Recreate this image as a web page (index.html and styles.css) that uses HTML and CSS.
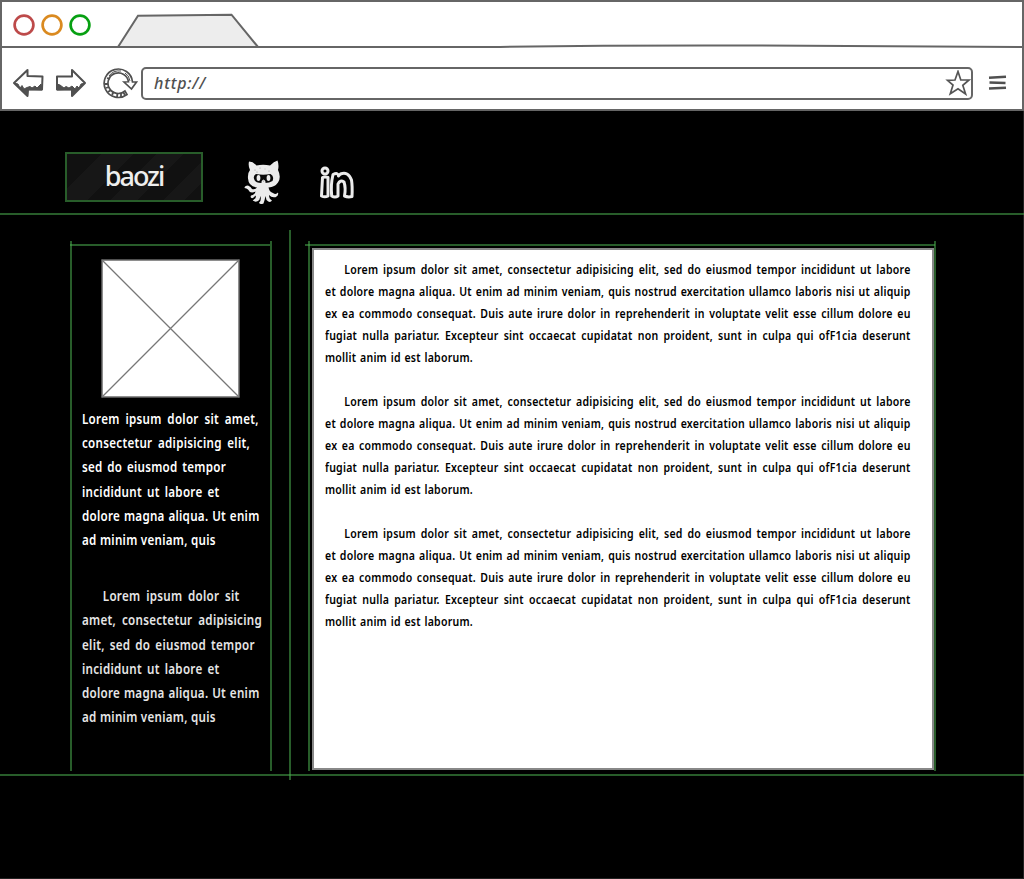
FILE: index.html
```html
<!DOCTYPE html>
<html lang="en">
<head>
<meta charset="utf-8">
<title>baozi</title>
<link rel="stylesheet" href="styles.css">
</head>
<body>
<div class="window">
  <header class="chrome">
    <div class="titlebar">
      <svg class="titlebar-art" width="1024" height="48" viewBox="0 0 1024 48">
        <g fill="none" stroke-width="2.7"><circle cx="24" cy="25" r="9.4" stroke="#bd4a4a"/><circle cx="52" cy="25" r="9.4" stroke="#da8a20"/><circle cx="80" cy="25" r="9.4" stroke="#07a012"/></g>
        <path d="M118 47 L138 15.7 L231.500 14.700 L258 47" fill="#ededed" stroke="#666" stroke-width="2"/>
        <path d="M0 47 L500 47 Q620 45 760 45.500 T1024 47" fill="none" stroke="#666" stroke-width="2"/>
      </svg>
    </div>
    <div class="toolbar">
      <svg class="arrows" width="76" height="32" viewBox="12 67 76 32" fill="none" stroke="#505050" stroke-width="2" stroke-linejoin="round">
        <path d="M14 83 L27.500 70 L27.500 76 L42.500 76.500 L42 89.500 L28 89 L27.500 96 Z"/>
        <path fill="#505050" stroke-width="1" d="M14 83 L18 84 L20 88 L22 85.500 L24 89 L27 87.500 L30 86.500 L32 88 L35 86 L37 88 L41 84 L42 90 L28 90 L27.500 96 Z"/>
        <path d="M85 83 L72 70 L72 76.500 L57 76.500 L57 89.500 L72 89 L72 96 Z"/>
        <path fill="#505050" stroke-width="1" d="M85 83 L81 84 L79 88 L77 86 L75 89 L72 86 L69 88 L66 86.500 L64 88 L60 85 L57 84 L57 90 L72 90 L72 96 Z"/>
      </svg>
      <svg class="reload" width="36" height="34" viewBox="103 66 36 34" fill="none" stroke="#505050">
        <path stroke-width="1.700" d="M127 94.500 A14.200 14.200 0 1 1 132.500 82 L136.500 82 L131.500 89 L124 82 L128.500 81.800 A10.300 10.300 0 1 0 125 91 Z"/>
        <path stroke-width="1.800" d="M105 84 h3 M106 88 l3 -1 M108 92 l3 -2 M112 95 l1.500 -3 M117 97 l.5 -4 M121 97 v-4 M125 95 l-2 -3 M107 78 l3 1"/>
        <path stroke-width="1" d="M109 76 Q113 70 121 71 M130 81 Q129 75 125 73"/>
      </svg>
      <div class="address">
        <span class="url">http://</span>
        <svg class="star" width="26" height="26" viewBox="945 70 26 26"><path d="M958 71.500 L960.800 80 L969 80 L962.800 85.300 L965.600 94 L958 88.700 L950.300 93.700 L953 85 L947.500 80.300 L955 80 Z" fill="none" stroke="#555" stroke-width="1.700"/></svg>
      </div>
      <svg class="menu" width="20" height="16" viewBox="988 75 20 16"><path d="M989 77.700 L1006 76.800 M989.500 82.500 L1005.500 83 M989 88.500 L1006 87.800" stroke="#505050" stroke-width="2.500"/></svg>
    </div>
  </header>

  <div class="page">
    <nav class="nav">
      <div class="brand">baozi</div>
      <svg class="octocat" width="38" height="46" viewBox="243 159 38 46">
        <path fill="#ececec" d="M249 161.500 Q253 161.500 256.500 165.500 Q263 164.200 270 165.500 Q274 161.500 277.500 160.500 Q279.200 165 278 170 Q281.500 177 278 182.500 Q275 187 268.500 187.500 Q269.500 192 273 193 Q276 195 278 192.500 Q279 195.500 275.500 197.200 Q271.500 198 269 195 Q269 199 272 200.500 Q270 203.500 266.500 200 L265.500 196 Q264.500 201 263.500 203.500 Q260 205 259 202.800 Q261.500 201.500 260.500 196 L259.300 200 Q256 203 252.700 200.500 Q257 198 255.500 195.500 Q253 198.800 251.500 198 Q250 197.500 251 195.500 Q255 194.500 255.500 191.500 Q250 194 248 189.500 Q246.500 188 244.500 188 Q244.500 185.500 248 185.500 Q251 186.500 252 189 Q255 190 257 187.500 Q248.500 186.500 248 178.500 Q247.500 173 250 170 Q248 166 249 161.500 Z"/>
        <path fill="#090909" d="M256 174 Q263 175.500 270.500 174 Q274.500 176 272.500 181 Q269 183.500 263 183 Q256 183.500 254.500 180 Q252.500 176 256 174 Z"/>
        <ellipse cx="258.500" cy="178" rx="1.900" ry="3" fill="#ececec"/><ellipse cx="268.500" cy="178" rx="1.900" ry="3" fill="#ececec"/>
        <path d="M261.500 183.500 Q261 180.500 263.500 179.500 Q266 180.500 265.500 183.500 Z" fill="#ececec"/>
        <g fill="#858585"><circle cx="255" cy="170" r=".5"/><circle cx="260" cy="168" r=".5"/><circle cx="257" cy="172" r=".5"/><circle cx="265" cy="169" r=".4"/><circle cx="269" cy="171" r=".5"/><circle cx="263.500" cy="181" r=".6"/></g>
      </svg>
      <svg class="linkedin" width="38" height="36" viewBox="318 165 38 36" fill="#000" stroke="#ececec" stroke-width="3" stroke-linejoin="round">
        <circle cx="325" cy="171" r="3"/>
        <path d="M322.500 177.500 Q325 176.300 328 177.500 L328 196 Q325 197.700 321.500 196 Z"/>
        <path d="M333 174.500 Q330.500 185 331.700 196 Q335 198 338 196 L338 184 Q340 179.500 344 182 Q346 188 344.500 196 Q348 197.500 352 196.500 Q352.500 186 351.500 180 Q348 171 340.500 174 L338.500 176 Q338 172 333 174.500 Z"/>
      </svg>
    </nav>

    <div class="columns">
      <aside class="sidebar">
        <svg class="portrait" width="139" height="139" viewBox="0 0 139 139"><rect x="1" y="1" width="137" height="137" fill="#fff" stroke="#6a6a6a" stroke-width="1.500"/><path d="M1 1 L138 138 M138 1 L1 138" stroke="#777" stroke-width="1.300"/></svg>
        <p class="note">
          <span class="s-a">Lorem ipsum dolor sit amet,</span>
          <span class="s-b">consectetur adipisicing elit,</span>
          <span class="s-c">sed do eiusmod tempor</span>
          <span class="s-d">incididunt ut labore et</span>
          <span class="s-e">dolore magna aliqua. Ut enim</span>
          <span class="s-f">ad minim veniam, quis</span>
        </p>
        <p class="note note-soft">
          <span class="s-g">Lorem ipsum dolor sit</span>
          <span class="s-h">amet, consectetur adipisicing</span>
          <span class="s-i">elit, sed do eiusmod tempor</span>
          <span class="s-d">incididunt ut labore et</span>
          <span class="s-e">dolore magna aliqua. Ut enim</span>
          <span class="s-f">ad minim veniam, quis</span>
        </p>
      </aside>
      <main class="article">
        <p class="copy">
          <span class="first">Lorem ipsum dolor sit amet, consectetur adipisicing elit, sed do eiusmod tempor incididunt ut labore</span>
          <span>et dolore magna aliqua. Ut enim ad minim veniam, quis nostrud exercitation ullamco laboris nisi ut aliquip</span>
          <span>ex ea commodo consequat. Duis aute irure dolor in reprehenderit in voluptate velit esse cillum dolore eu</span>
          <span>fugiat nulla pariatur. Excepteur sint occaecat cupidatat non proident, sunt in culpa qui ofF1cia deserunt</span>
          <span class="last">mollit anim id est laborum.</span>
        </p>
        <p class="copy">
          <span class="first">Lorem ipsum dolor sit amet, consectetur adipisicing elit, sed do eiusmod tempor incididunt ut labore</span>
          <span>et dolore magna aliqua. Ut enim ad minim veniam, quis nostrud exercitation ullamco laboris nisi ut aliquip</span>
          <span>ex ea commodo consequat. Duis aute irure dolor in reprehenderit in voluptate velit esse cillum dolore eu</span>
          <span>fugiat nulla pariatur. Excepteur sint occaecat cupidatat non proident, sunt in culpa qui ofF1cia deserunt</span>
          <span class="last">mollit anim id est laborum.</span>
        </p>
        <p class="copy">
          <span class="first">Lorem ipsum dolor sit amet, consectetur adipisicing elit, sed do eiusmod tempor incididunt ut labore</span>
          <span>et dolore magna aliqua. Ut enim ad minim veniam, quis nostrud exercitation ullamco laboris nisi ut aliquip</span>
          <span>ex ea commodo consequat. Duis aute irure dolor in reprehenderit in voluptate velit esse cillum dolore eu</span>
          <span>fugiat nulla pariatur. Excepteur sint occaecat cupidatat non proident, sunt in culpa qui ofF1cia deserunt</span>
          <span class="last">mollit anim id est laborum.</span>
        </p>
      </main>
    </div>
  </div>

  <svg class="guides" width="1024" height="879" viewBox="0 0 1024 879" fill="none" stroke="#4caf50" stroke-opacity=".53" stroke-width="2">
    <path d="M0 214 H1024"/><path d="M0 775 H1024"/>
    <path d="M71 241 V771"/><path d="M271 241 V771"/><path d="M70 245 H270"/>
    <path d="M290 230 V780"/><path d="M309 241 V771"/><path d="M305 245 H935"/><path d="M935 241 V771"/>
  </svg>
</div>
</body>
</html>
```
FILE: styles.css
```css
* { box-sizing: border-box; }
body { margin: 0; background: #000; font-family: "Noto Sans", "Open Sans", sans-serif; }
svg { display: block; flex: none; }
.window { position: relative; width: 1024px; height: 879px; overflow: hidden; }
.chrome { height: 111px; background: #fff; border: 2px solid #666; }
.titlebar { height: 46px; }
.titlebar-art { margin: -2px 0 0 -2px; }
.toolbar { display: flex; align-items: center; height: 61px; padding: 13px 0 0 10px; }
.reload { margin-left: 15px; }
.address { display: flex; align-items: center; justify-content: space-between; width: 832px; height: 33px; margin-left: 2px; padding: 0 0 0 11px; border: 2px solid #666; border-radius: 5px; }
.url { display: block; color: #505050; font-size: 16px; font-style: italic; font-weight: 500; line-height: 28px; letter-spacing: .8px; }
.menu { margin-left: 15px; }
.page { height: 768px; border: solid #222; border-width: 0 1px 1px 0; }
.nav { display: flex; height: 102px; padding: 41px 0 0 65px; }
.brand { width: 138px; height: 50px; border: 2px solid #285d2a; background: linear-gradient(135deg, #111 0 19%, #171717 19% 37%, #111 37% 50%, #171717 50% 65%, #111 65% 79%, #171717 79% 91%, #111 91%); color: #eee; text-align: center; font-size: 27px; font-weight: 500; line-height: 44px; letter-spacing: -2px; }
.octocat { margin: 7px 0 0 40px; }
.linkedin { margin: 13px 0 0 37px; }
.columns { display: flex; gap: 40px; padding: 35px 0 0 72px; }
.sidebar { width: 200px; padding: 11px 0 0 10px; }
.portrait { margin: 0 0 0 19px; }
.note, .copy { margin: 0; white-space: nowrap; transform-origin: left top; text-align: left; text-align-last: justify; }
.note span, .copy span { display: block; }
.note { margin-top: 8px; color: #fff; font-size: 14.5px; font-weight: 600; line-height: 24.2px; letter-spacing: .35px; transform: scaleX(.8); }
.note-soft { margin-top: 32px; color: #e6e6e6; }
.s-a { width: 221px; }
.s-b { width: 210px; }
.s-c { width: 180px; }
.s-d { width: 172px; }
.s-e { width: 222px; }
.s-f { width: 164px; }
.s-g { width: 171px; margin-left: 26px; }
.s-h { width: 225px; }
.s-i { width: 216px; }
.article { width: 622px; height: 522px; padding: 8px 11px; border: 2px solid #888; background: #fff; color: #000; }
.copy { width: 732px; margin-bottom: 22px; font-size: 13.2px; font-weight: 600; line-height: 22px; letter-spacing: .3px; transform: scaleX(.8); }
.copy .first { margin-left: 24px; }
.copy .last { width: 185px; }
.guides { position: absolute; inset: 0; pointer-events: none; }
```
